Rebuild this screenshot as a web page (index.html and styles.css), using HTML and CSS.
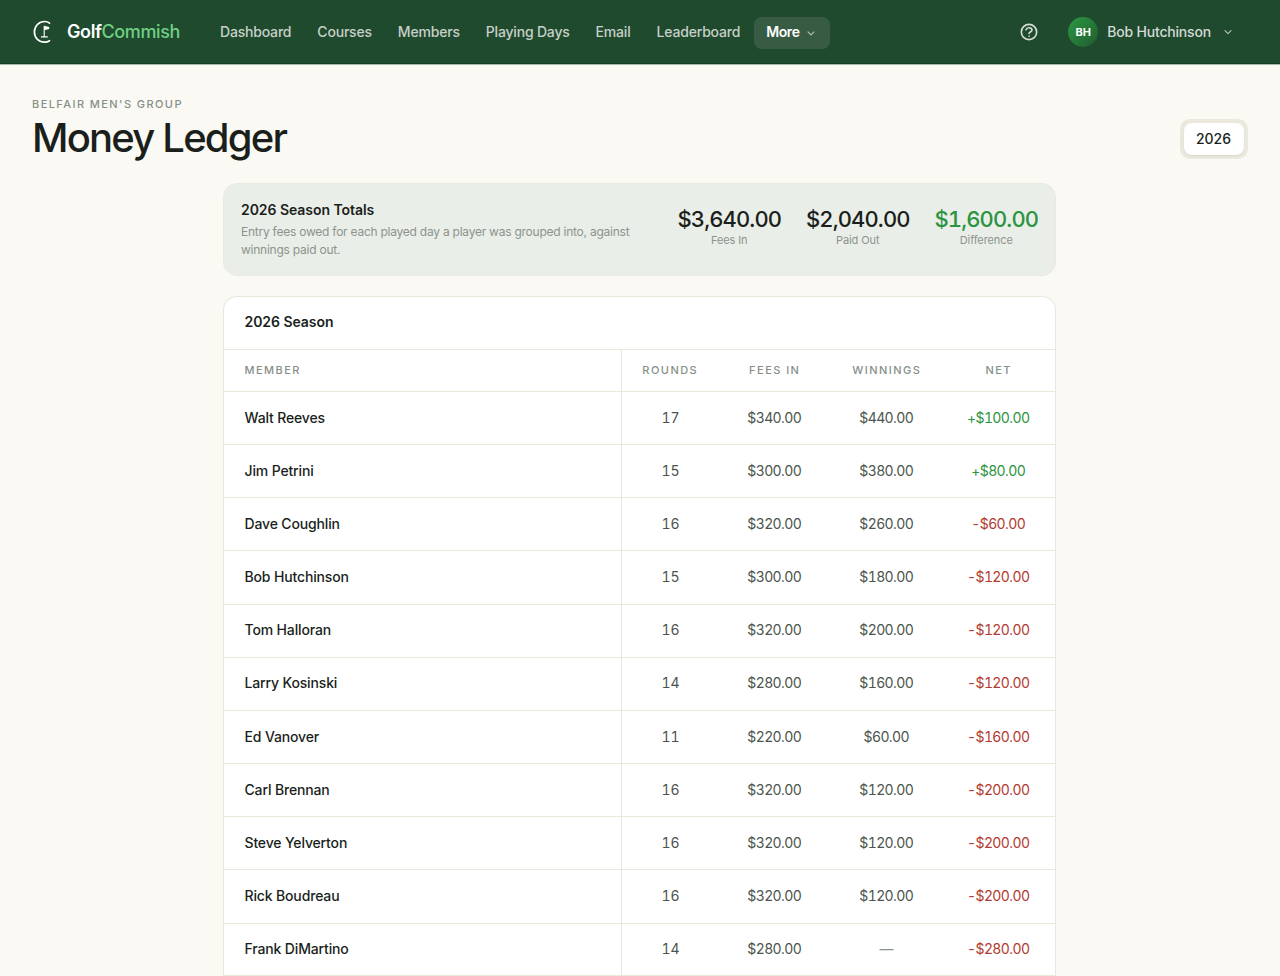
FILE: index.html
```
<!DOCTYPE html>
<html lang="en">
<head>
  <meta charset="UTF-8">
  <meta name="viewport" content="width=device-width, initial-scale=1.0">
  <title>Money Ledger - GolfCommish</title>
  <link rel="stylesheet" href="styles.css">
</head>
<body>
  <header class="navbar">
    <a class="brand" href="#">
      <svg class="brand-mark" width="24" height="24" viewBox="0 0 24 24" fill="none" stroke="#fff" stroke-linecap="round">
        <path d="M17.5 3.1C16.1 1.9 14.5 1.5 12.6 1.5C7 1.5 2.4 6 2.4 12S7 22.1 12.6 22.1C14.5 22.1 16.1 21.7 17.5 20.7" stroke-width="1.7"/>
        <path d="M12.2 6.3V16.7M9.4 16.9H15.4" stroke-width="1.1"/>
        <path d="M12.2 5.8L17.2 7V9L12.2 10.2Z" fill="#fff" stroke="none"/>
      </svg>
      <span class="brand-name">Golf<span>Commish</span></span>
    </a>
    <nav class="nav-links">
      <a href="#">Dashboard</a>
      <a href="#">Courses</a>
      <a href="#">Members</a>
      <a href="#">Playing Days</a>
      <a href="#">Email</a>
      <a href="#">Leaderboard</a>
      <a href="#" class="active">More
        <svg width="12" height="12" viewBox="0 0 12 12" fill="none" stroke="currentColor" stroke-width="1.2" stroke-linecap="round" stroke-linejoin="round"><path d="M3 4.9L6 7.9L9 4.9"/></svg>
      </a>
    </nav>
    <div class="nav-user">
      <svg class="help" width="20" height="20" viewBox="0 0 24 24" fill="none" stroke="currentColor" stroke-width="2" stroke-linecap="round" stroke-linejoin="round">
        <circle cx="12" cy="12" r="9.2"/>
        <path d="M8.4 9.2c.5-1.6 1.9-2.3 3.6-2.3 2 0 3.6 1.1 3.6 2.8 0 2.4-3.5 2.3-3.5 4.1M12.1 17v.1"/>
      </svg>
      <span class="avatar">BH</span>
      <span class="user-name">Bob Hutchinson</span>
      <svg class="caret" width="12" height="12" viewBox="0 0 12 12" fill="none" stroke="currentColor" stroke-width="1.2" stroke-linecap="round" stroke-linejoin="round"><path d="M3 4.7L6 7.7L9 4.7"/></svg>
    </div>
  </header>

  <main class="page">
    <div class="page-head">
      <div>
        <div class="eyebrow">BELFAIR MEN'S GROUP</div>
        <h1>Money Ledger</h1>
      </div>
      <div class="season-switch"><button>2026</button></div>
    </div>

    <div class="content">
      <section class="totals">
        <div class="totals-text">
          <h2>2026 Season Totals</h2>
          <p>Entry fees owed for each played day a player was grouped into, against winnings paid out.</p>
        </div>
        <div class="stats">
          <div class="stat"><strong>$3,640.00</strong><span>Fees In</span></div>
          <div class="stat"><strong>$2,040.00</strong><span>Paid Out</span></div>
          <div class="stat"><strong class="pos">$1,600.00</strong><span>Difference</span></div>
        </div>
      </section>

      <section class="card">
        <h2 class="card-title">2026 Season</h2>
        <table class="ledger">
          <colgroup>
            <col><col class="col-rounds"><col class="col-money"><col class="col-money"><col class="col-money">
          </colgroup>
          <thead>
            <tr><th>MEMBER</th><th>ROUNDS</th><th>FEES IN</th><th>WINNINGS</th><th>NET</th></tr>
          </thead>
          <tbody>
            <tr><td>Walt Reeves</td><td>17</td><td>$340.00</td><td>$440.00</td><td class="pos">+$100.00</td></tr>
            <tr><td>Jim Petrini</td><td>15</td><td>$300.00</td><td>$380.00</td><td class="pos">+$80.00</td></tr>
            <tr><td>Dave Coughlin</td><td>16</td><td>$320.00</td><td>$260.00</td><td class="neg">-$60.00</td></tr>
            <tr><td>Bob Hutchinson</td><td>15</td><td>$300.00</td><td>$180.00</td><td class="neg">-$120.00</td></tr>
            <tr><td>Tom Halloran</td><td>16</td><td>$320.00</td><td>$200.00</td><td class="neg">-$120.00</td></tr>
            <tr><td>Larry Kosinski</td><td>14</td><td>$280.00</td><td>$160.00</td><td class="neg">-$120.00</td></tr>
            <tr><td>Ed Vanover</td><td>11</td><td>$220.00</td><td>$60.00</td><td class="neg">-$160.00</td></tr>
            <tr><td>Carl Brennan</td><td>16</td><td>$320.00</td><td>$120.00</td><td class="neg">-$200.00</td></tr>
            <tr><td>Steve Yelverton</td><td>16</td><td>$320.00</td><td>$120.00</td><td class="neg">-$200.00</td></tr>
            <tr><td>Rick Boudreau</td><td>16</td><td>$320.00</td><td>$120.00</td><td class="neg">-$200.00</td></tr>
            <tr><td>Frank DiMartino</td><td>14</td><td>$280.00</td><td class="none">—</td><td class="neg">-$280.00</td></tr>
          </tbody>
        </table>
      </section>
    </div>
  </main>
</body>
</html>
```
FILE: styles.css
```
* {
  box-sizing: border-box;
}
body {
  margin: 0;
  height: 976px;
  overflow: hidden;
  background: #faf9f4;
  color: #1a1f1c;
  font-family: Inter, "Liberation Sans", sans-serif;
  font-size: 14px;
}
h1, h2, p {
  margin: 0;
}
a {
  color: inherit;
  text-decoration: none;
}

/* top bar */
.navbar {
  display: flex;
  align-items: center;
  height: 64px;
  padding: 1px 46px 0 32px;
  background: #204a2e;
  border-bottom: 1px solid #183c24;
  box-shadow: 0 1px 0 #a9b8aa;
}
.brand {
  display: flex;
  align-items: center;
  gap: 12px;
  width: 176px;
}
.brand-name {
  margin: -1px 0 0 -1px;
  font-size: 18px;
  font-weight: 600;
  letter-spacing: -0.4px;
  color: #fff;
}
.brand-name span {
  font-weight: 500;
  color: #6fd083;
}
.nav-links {
  display: flex;
  gap: 2px;
  margin-top: 2px;
}
.nav-links a {
  display: flex;
  align-items: center;
  gap: 5px;
  height: 32px;
  padding: 0 12px 3px;
  border-radius: 8px;
  font-weight: 500;
  letter-spacing: -0.19px;
  color: #c6d0c8;
  white-space: nowrap;
}
.nav-links a.active {
  padding-right: 13px;
  background: #375c43;
  color: #fff;
  font-weight: 600;
  letter-spacing: -0.4px;
}
.nav-links svg,
.caret {
  color: #b0beb4;
}
.nav-links svg {
  margin-top: 2px;
}
.nav-user {
  display: flex;
  align-items: center;
  margin-left: auto;
  color: #d3dbd5;
}
.avatar {
  display: flex;
  align-items: center;
  justify-content: center;
  width: 30px;
  height: 30px;
  margin: 0 9px 0 29px;
  border-radius: 50%;
  background: linear-gradient(135deg, #2b9a41, #205a31);
  color: #fff;
  font-size: 11px;
  font-weight: 700;
}
.user-name {
  margin: -1px 11px 0 0;
  font-weight: 500;
  letter-spacing: -0.18px;
}

/* page heading */
.page {
  padding: 33px 32px 0;
}
.page-head {
  display: flex;
  align-items: flex-end;
  justify-content: space-between;
  height: 62px;
}
.eyebrow {
  font-size: 11px;
  line-height: 15px;
  font-weight: 500;
  letter-spacing: 1.42px;
  color: #869089;
}
h1 {
  margin: 2px 0 -3px;
  font-size: 40px;
  line-height: 48px;
  font-weight: 500;
  letter-spacing: -1.8px;
}
.season-switch {
  padding: 4px;
  border-radius: 10px;
  background: #ebe9de;
}
.season-switch button {
  display: block;
  width: 60px;
  height: 32px;
  padding: 0 1px 2px 0;
  border: 0;
  border-radius: 8px;
  background: #fff;
  box-shadow: 0 1px 2px rgba(0, 0, 0, 0.08);
  color: #1a1f1c;
  font: 500 14px Inter, sans-serif;
}

.content {
  width: 833px;
  margin: 24px 0 0 191px;
}

/* season totals */
.totals {
  display: flex;
  align-items: center;
  justify-content: space-between;
  height: 93px;
  padding: 0 17px;
  border: 1px solid #ebeae0;
  border-radius: 14px;
  background: #eaeee8;
}
.totals-text {
  width: 400px;
}
.totals h2,
.card-title {
  font-size: 14px;
  font-weight: 600;
  letter-spacing: -0.05px;
}
.totals h2 {
  line-height: 20px;
}
.totals p {
  margin-top: 3px;
  font-size: 12px;
  line-height: 18px;
  letter-spacing: -0.24px;
  color: #8a948d;
}
.stats {
  display: flex;
  gap: 25px;
  margin-top: -6px;
}
.stat {
  width: 103.5px;
  text-align: center;
}
.stat strong {
  display: block;
  font-size: 22px;
  line-height: 27px;
  font-weight: 500;
  letter-spacing: -0.88px;
  font-feature-settings: "tnum";
  white-space: nowrap;
}
.stat span {
  display: block;
  font-size: 11px;
  line-height: 15px;
  letter-spacing: -0.1px;
  color: #8a948d;
}

/* ledger table */
.card {
  margin-top: 20px;
  border: 1px solid #e9e8dd;
  border-bottom: 0;
  border-radius: 14px 14px 0 0;
  background: #fff;
}
.card-title {
  padding: 0 20.5px;
  height: 52px;
  line-height: 50px;
}
.ledger {
  width: 100%;
  table-layout: fixed;
  border-collapse: separate;
  border-spacing: 0;
}
.col-rounds {
  width: 97px;
}
.col-money {
  width: 112px;
}
.ledger th,
.ledger td {
  padding: 0 1.5px 2px 0;
  border-top: 1px solid #e9e8dd;
  text-align: center;
}
.ledger th {
  height: 42px;
  padding-right: 0.5px;
  font-size: 11px;
  font-weight: 500;
  letter-spacing: 1.45px;
  color: #869089;
}
.ledger td {
  height: 53.17px;
  color: #4b544e;
  letter-spacing: -0.6px;
  font-feature-settings: "tnum";
}
.ledger tr:last-child td {
  border-bottom: 1px solid #e9e8dd;
}
.ledger th:first-child,
.ledger td:first-child {
  padding-left: 20.5px;
  border-right: 1px solid #e9e8dd;
  text-align: left;
}
.ledger td:first-child {
  font-weight: 500;
  letter-spacing: -0.15px;
  color: #1a1f1c;
}
.ledger td:nth-child(2) {
  padding-right: 0;
  letter-spacing: -0.2px;
}
.stat .pos,
.ledger .pos {
  color: #2b9440;
}
.ledger .neg {
  color: #b23a30;
}
.ledger .none {
  color: #8a948d;
}
```
